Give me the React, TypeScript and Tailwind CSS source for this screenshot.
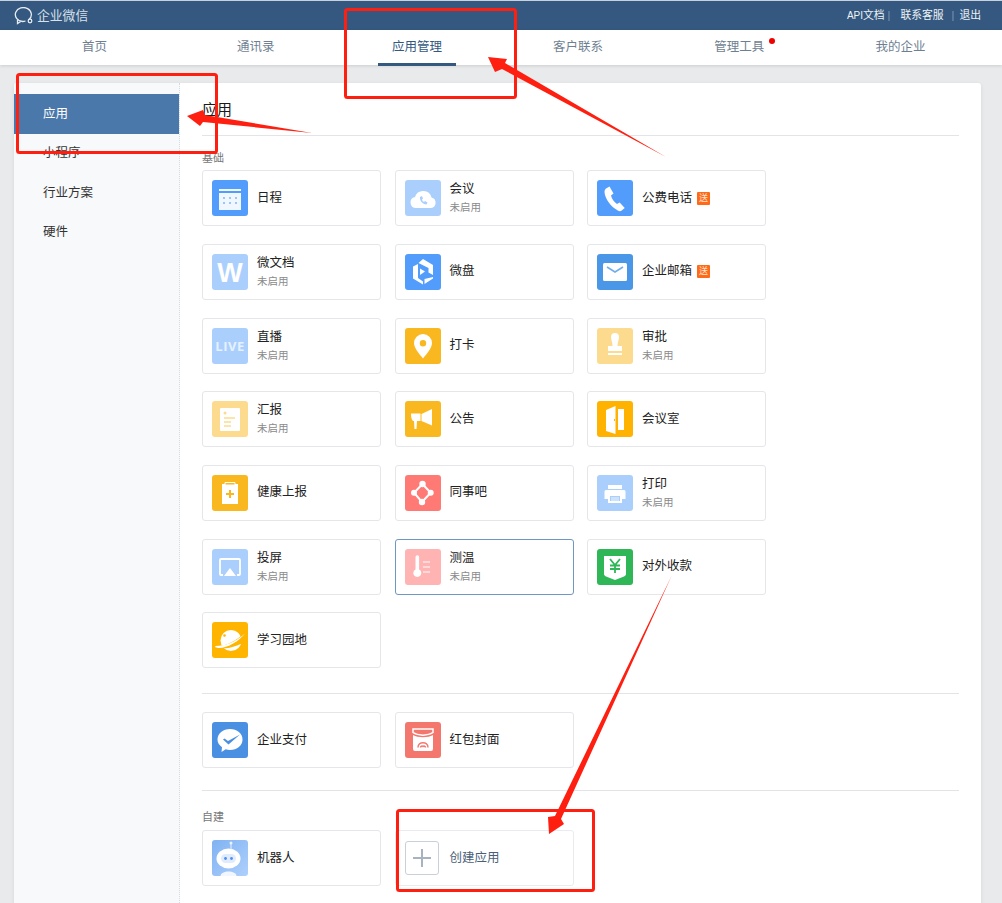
const navItems = ["首页", "通讯录", "应用管理", "客户联系", "管理工具", "我的企业"];
const sideItems = ["应用", "小程序", "行业方案", "硬件"];

type AppItem = { name: string; icon: string; off?: boolean; gift?: boolean; active?: boolean };

const baseApps: AppItem[] = [
  { name: "日程", icon: "calendar" },
  { name: "会议", icon: "cloud", off: true },
  { name: "公费电话", icon: "phone", gift: true },
  { name: "微文档", icon: "doc", off: true },
  { name: "微盘", icon: "disk" },
  { name: "企业邮箱", icon: "mail", gift: true },
  { name: "直播", icon: "live", off: true },
  { name: "打卡", icon: "pin" },
  { name: "审批", icon: "stamp", off: true },
  { name: "汇报", icon: "report", off: true },
  { name: "公告", icon: "horn" },
  { name: "会议室", icon: "door" },
  { name: "健康上报", icon: "health" },
  { name: "同事吧", icon: "share" },
  { name: "打印", icon: "print", off: true },
  { name: "投屏", icon: "cast", off: true },
  { name: "测温", icon: "thermo", off: true, active: true },
  { name: "对外收款", icon: "money" },
  { name: "学习园地", icon: "planet" },
];

const payApps: AppItem[] = [
  { name: "企业支付", icon: "pay" },
  { name: "红包封面", icon: "redbag" },
];

const AppIcon = ({ kind }: { kind: string }) => {
  const box = "block w-9 h-9 shrink-0";
  switch (kind) {
    case "calendar":
      return (
        <svg className={box} viewBox="0 0 36 36">
          <rect width="36" height="36" rx="3" fill="#529dfc" />
          <rect x="7" y="9" width="22" height="21" fill="#fff" opacity=".92" />
          <rect x="7" y="11" width="22" height="2" fill="#529dfc" />
          {[12, 18, 24].map((x) =>
            [18, 23].map((y) => <circle key={x + "-" + y} cx={x} cy={y} r="1" fill="#7db5fc" />)
          )}
        </svg>
      );
    case "cloud":
      return (
        <svg className={box} viewBox="0 0 36 36">
          <rect width="36" height="36" rx="3" fill="#abcffd" />
          <path d="M11 28a5.5 5.5 0 0 1-1-10.900a8.500 8.500 0 0 1 16.500 0.500a5.300 5.300 0 0 1-.5 10.400z" fill="#fff" />
          <path d="M15 17c-.5 4 2.500 7 6.500 7.500l1-2-2.500-1.500-1 1c-1-.5-1.800-1.500-2-2.500l1-1-1-2.500z" fill="#abcffd" />
        </svg>
      );
    case "phone":
      return (
        <svg className={box} viewBox="0 0 36 36">
          <rect width="36" height="36" rx="3" fill="#529dfc" />
          <path d="M9 8.500l3.500-2 4 7-2.500 2c.8 3.500 3 6.500 6 8.500l2.700-1.500 5 5.500-3 2.500c-1 .8-2.300.8-3.500.2C14 27 8 19 7.500 12c0-1.500.5-2.800 1.500-3.500z" fill="#fff" />
        </svg>
      );
    case "doc":
      return (
        <svg className={box} viewBox="0 0 36 36">
          <rect width="36" height="36" rx="3" fill="#abcffd" />
          <text x="18" y="28" textAnchor="middle" fontSize="27" fontWeight="700" fill="#fff" fontFamily="Liberation Sans">W</text>
        </svg>
      );
    case "disk":
      return (
        <svg className={box} viewBox="0 0 36 36">
          <rect width="36" height="36" rx="3" fill="#529dfc" />
          <path d="M18 5l10 6v10l-4.500-2.500V14L13.500 9z" fill="#fff" />
          <path d="M8 12.500l5-2.500v14l5 3.500v3L8 24.500z" fill="#fff" />
          <path d="M28 23v1.500L19.500 30v-5z" fill="#fff" />
          <path d="M15 14.500l5 3-5 3.500z" fill="#fff" />
        </svg>
      );
    case "mail":
      return (
        <svg className={box} viewBox="0 0 36 36">
          <rect width="36" height="36" rx="3" fill="#4a97e8" />
          <rect x="6" y="9" width="24" height="18" rx="1.500" fill="#fff" />
          <path d="M10 13l8 5 8-5" fill="none" stroke="#6fadee" strokeWidth="1.500" />
        </svg>
      );
    case "live":
      return (
        <svg className={box} viewBox="0 0 36 36">
          <rect width="36" height="36" rx="3" fill="#abcffd" />
          <text x="18" y="23" textAnchor="middle" fontSize="13" fontWeight="700" fill="#e6f1ff" fontFamily="Open Sans" letterSpacing=".5">LIVE</text>
        </svg>
      );
    case "pin":
      return (
        <svg className={box} viewBox="0 0 36 36">
          <rect width="36" height="36" rx="3" fill="#f9b81f" />
          <path fillRule="evenodd" d="M18 6a9 9 0 0 0-9 9c0 5 5 10.500 9 15.500 4-5 9-10.500 9-15.500a9 9 0 0 0-9-9zm0 6a3.200 3.200 0 1 1 0 6.400 3.200 3.200 0 0 1 0-6.400z" fill="#fff" />
        </svg>
      );
    case "stamp":
      return (
        <svg className={box} viewBox="0 0 36 36">
          <rect width="36" height="36" rx="3" fill="#fddb8e" />
          <path d="M14 9a4 4 0 0 1 8 0c0 3-1.500 5-1.500 9h4.500v5H11v-5h4.500c0-4-1.500-6-1.500-9z" fill="#fff" />
          <rect x="11" y="25" width="14" height="2" fill="#fff" />
        </svg>
      );
    case "report":
      return (
        <svg className={box} viewBox="0 0 36 36">
          <rect width="36" height="36" rx="3" fill="#fddb8e" />
          <rect x="8" y="7" width="20" height="23" rx="1" fill="#fff" />
          <circle cx="13" cy="12" r="1.500" fill="#fddb8e" />
          <path d="M12 17h11M12 21h7M12 25h7" stroke="#fddb8e" strokeWidth="1.500" />
        </svg>
      );
    case "horn":
      return (
        <svg className={box} viewBox="0 0 36 36">
          <rect width="36" height="36" rx="3" fill="#f9b81f" />
          <path d="M6 12.500h9.500V20h-3.500l-.5 8h-2l-.5-8H8c-1.500-1.500-2-4-2-7.500z" fill="#fff" />
          <path d="M16.500 13L27 8v16.500L16.500 20z" fill="#fff" />
        </svg>
      );
    case "door":
      return (
        <svg className={box} viewBox="0 0 36 36">
          <rect width="36" height="36" rx="3" fill="#ffb200" />
          <path d="M9 9L18.500 5v28L9 30z" fill="#fff" />
          <rect x="21" y="8" width="6" height="21" fill="#fff" />
          <rect x="17" y="18" width="1" height="2" fill="#ffb200" />
        </svg>
      );
    case "health":
      return (
        <svg className={box} viewBox="0 0 36 36">
          <rect width="36" height="36" rx="3" fill="#f9b81f" />
          <path d="M10 9h16v20H10z" fill="#fff" />
          <path d="M13 7.500h10v2.500H13z" fill="#f9b81f" stroke="#fff" strokeWidth="1" />
          <path d="M18 15v8M14 19h8" stroke="#f9b81f" strokeWidth="2" />
        </svg>
      );
    case "share":
      return (
        <svg className={box} viewBox="0 0 36 36">
          <rect width="36" height="36" rx="3" fill="#ff7a75" />
          <path d="M17.500 9L25.700 17.700 17 27 9 17.700z" fill="none" stroke="#fff" strokeWidth="2" />
          <circle cx="17.500" cy="9" r="3.200" fill="#fff" />
          <circle cx="9" cy="17.700" r="3" fill="#fff" />
          <circle cx="25.700" cy="17.700" r="3" fill="#fff" />
          <circle cx="17" cy="27" r="3.200" fill="#fff" />
        </svg>
      );
    case "print":
      return (
        <svg className={box} viewBox="0 0 36 36">
          <rect width="36" height="36" rx="3" fill="#abcffd" />
          <path d="M11 10h14v4H11z" fill="#fff" />
          <path d="M9 15h18a1.500 1.500 0 0 1 1.500 1.500V24H25v4H11v-4H7.500v-7.500A1.500 1.500 0 0 1 9 15z" fill="#fff" />
          <path d="M13 21h10v5H13z" fill="#abcffd" />
          <path d="M14 23h8M14 25h8" stroke="#fff" strokeWidth=".8" />
        </svg>
      );
    case "cast":
      return (
        <svg className={box} viewBox="0 0 36 36">
          <rect width="36" height="36" rx="3" fill="#abcffd" />
          <path d="M11 26H9a1 1 0 0 1-1-1V11a1 1 0 0 1 1-1h18a1 1 0 0 1 1 1v14a1 1 0 0 1-1 1h-2" fill="none" stroke="#fff" strokeWidth="1.800" />
          <path d="M18 19l6 8H12z" fill="#fff" />
        </svg>
      );
    case "thermo":
      return (
        <svg className={box} viewBox="0 0 36 36">
          <rect width="36" height="36" rx="3" fill="#ffb3b3" />
          <path d="M10.500 8a1.800 1.800 0 0 1 3.600 0v12.500a4 4 0 1 1-3.600 0z" fill="#fff" />
          <path d="M18 13h7M18 18h7M18 23h7" stroke="#fff" strokeWidth="1" />
        </svg>
      );
    case "money":
      return (
        <svg className={box} viewBox="0 0 36 36">
          <rect width="36" height="36" rx="3" fill="#2fb757" />
          <path d="M7 7h22v18c0 1-1 2-2 2.500L18 31l-9-3.500c-1-.5-2-1.500-2-2.500z" fill="#fff" />
          <path d="M13 10l5 6 5-6M18 16v8M13 16.500h10M13 20h10" fill="none" stroke="#2fb757" strokeWidth="1.800" />
        </svg>
      );
    case "planet":
      return (
        <svg className={box} viewBox="0 0 36 36">
          <rect width="36" height="36" rx="3" fill="#ffb400" />
          <circle cx="19" cy="18.500" r="10.500" fill="#fff" />
          <path d="M3 24c9 1 20-4 31-14v9c-8 5-19 9-31 7z" fill="#ffb400" />
          <path d="M3.500 24c10 0 20-4 29.500-12.500C27 19 16 26 7 26c-2.500 0-4.500-.8-3.500-2z" fill="#fff" />
          <circle cx="12.500" cy="13.500" r="1.300" fill="#ffb400" />
        </svg>
      );
    case "pay":
      return (
        <svg className={box} viewBox="0 0 36 36">
          <rect width="36" height="36" rx="3" fill="#4a90e2" />
          <path d="M18 7c7 0 12.500 4.500 12.500 10.500S25 28 18 28c-1.500 0-3-.2-4.300-.7L9.500 30l.5-4.800C7 23 5.500 20.500 5.500 17.500 5.500 11.500 11 7 18 7z" fill="#fff" />
          <path d="M11 17.500l1.500-1 3.500 2.500L28 12.500l-11.500 10z" fill="#4a90e2" />
        </svg>
      );
    case "redbag":
      return (
        <svg className={box} viewBox="0 0 36 36">
          <rect width="36" height="36" rx="3" fill="#f4776d" />
          <path d="M8 7h20v3.500c-5 3.500-15 3.500-20 0z" fill="none" stroke="#fff" strokeWidth="1.500" />
          <path d="M8 13c5 3 15 3 20 0v14a2 2 0 0 1-2 2H10a2 2 0 0 1-2-2z" fill="#fff" />
          <path d="M13 25.500c0-6.500 10-6.500 10 0M15.500 25.500a1.500 1.500 0 0 1 2.500-1 1.500 1.500 0 0 1 2.500 1" fill="none" stroke="#f4776d" strokeWidth="1.500" />
        </svg>
      );
    case "robot":
      return (
        <svg className={box} viewBox="0 0 36 36">
          <defs>
            <linearGradient id="robotBg" x1="0" y1="0" x2="1" y2="1">
              <stop offset="0" stopColor="#7fb2f2" />
              <stop offset="1" stopColor="#aed0fc" />
            </linearGradient>
          </defs>
          <rect width="36" height="36" rx="3" fill="url(#robotBg)" />
          <circle cx="19" cy="3" r="1.500" fill="#e8f1ff" />
          <path d="M19 4v5" stroke="#e8f1ff" strokeWidth="1" />
          <ellipse cx="16.500" cy="18.500" rx="12" ry="10" fill="#fff" />
          <rect x="9" y="14" width="15" height="9" rx="4.500" fill="#e0ecfe" />
          <circle cx="13.500" cy="18.500" r="1.400" fill="#4a90f2" />
          <circle cx="19.500" cy="18.500" r="1.400" fill="#4a90f2" />
          <path d="M8.500 36c0-6 16-6 16 0z" fill="#f1f6ff" />
        </svg>
      );
    default:
      return null;
  }
};

const AppCard = ({ item }: { item: AppItem }) => (
  <div
    className={`h-[56px] flex items-center pl-[9px] gap-[9px] bg-white border rounded-[3px] ${
      item.active ? "border-[#6f97c4]" : "border-[#e4e6e9]"
    }`}
  >
    <AppIcon kind={item.icon} />
    <div className="flex flex-col">
      <div className="flex items-center gap-[5px] text-[12.500px] leading-[17px] text-[#222]">
        {item.name}
        {item.gift && (
          <span className="w-[13px] h-[13px] flex items-center justify-center rounded-[1px] bg-[#ff6a1a] text-[9px] leading-none text-[#ffe3d1]">
            送
          </span>
        )}
      </div>
      {item.off && <div className="text-[10.500px] leading-[15px] mt-[2px] text-[#8a8a8a]">未启用</div>}
    </div>
  </div>
);

const CardGrid = ({ children }: { children: React.ReactNode }) => (
  <div className="grid grid-cols-[179px_179px_179px] gap-x-[13.500px] gap-y-[17.680px]">{children}</div>
);

// the red marks drawn on top of the screenshot
const Annotations = () => (
  <svg className="absolute left-0 top-0 w-[1002px] h-[903px] pointer-events-none" viewBox="0 0 1002 903">
    <g fill="none" stroke="#ff1f10" strokeWidth="3">
      <rect x="345.500" y="9.500" width="170" height="88" rx="2" />
      <rect x="17.500" y="74.500" width="199" height="78" rx="2" />
      <rect x="397.500" y="810.500" width="196" height="80" rx="2" />
    </g>
    <g fill="#ff1f10">
      <polygon points="312,133 203,122 200,126 187,116 203,110 205,115" />
      <polygon points="666,157 502,69 495,72 488,57 507,59 505,63" />
      <polygon points="672,575 555,816 548,817 549,834 564,824 561,819" />
    </g>
  </svg>
);

export default function App() {
  return (
    <div className="relative w-[1002px] h-[903px] overflow-hidden bg-[#e8eaec] font-['Liberation_Sans','Noto_Sans_CJK_SC',sans-serif]">
      <header className="h-[30px] border-t border-[#c9d2dc] bg-[#34587f] flex items-center justify-between pl-[14px] pr-[21px]">
        <div className="flex items-center gap-[3px] text-[12.800px] text-[#d9e1ea]">
          <svg className="w-5 h-[18px]" viewBox="0 0 20 18" fill="none" stroke="#e6ecf2" strokeWidth="1.300">
            <path d="M15 12.500A8 7 0 1 0 8.500 14.500c1 0 2-.1 3-.5" />
            <path d="M3.500 12.500v4l3.200-2" />
            <circle cx="16" cy="14" r="1.800" />
          </svg>
          企业微信
        </div>
        <div className="flex items-center text-[10.800px] text-[#eef2f6]">
          <span>
            <span className="text-[10px]">API</span>文档
          </span>
          <span className="ml-[3px] mr-[10px] text-[#7f9ab8]">|</span>
          <span>联系客服</span>
          <span className="ml-[8px] mr-[5px] text-[#7f9ab8]">|</span>
          <span>退出</span>
        </div>
      </header>

      <nav className="h-[35px] bg-white shadow-[0_1px_3px_rgba(0,0,0,0.12)] pl-[14px] pr-[21px] grid grid-cols-6">
        {navItems.map((label, i) => (
          <div
            key={label}
            className={`relative flex items-center justify-center text-[12.500px] ${
              i === 2 ? "text-[#34587f]" : "text-[#6f7f92]"
            }`}
          >
            {label}
            {i === 2 && <span className="absolute bottom-[-1px] left-[41.500px] w-[78px] h-[3px] bg-[#34587f]" />}
            {label === "管理工具" && <span className="absolute top-[8px] left-[110px] w-[6px] h-[6px] rounded-full bg-[#f00000]" />}
          </div>
        ))}
      </nav>

      <div className="mt-[18px] mx-[14px] h-[900px] w-[967px] flex bg-white rounded-t-[3px] shadow-[0_1px_4px_rgba(0,0,0,0.08)]">
        <aside className="w-[166px] shrink-0 pt-[11px] bg-[#f8f9fb] border-r border-dotted border-[#d5dbe3] rounded-tl-[3px]">
          {sideItems.map((label, i) => (
            <div
              key={label}
              className={`h-[39.300px] flex items-center pl-[29px] text-[12.500px] ${
                i === 0 ? "h-[40px] bg-[#4a78ab] text-white" : "text-[#333]"
              }`}
            >
              {label}
            </div>
          ))}
        </aside>

        <main className="flex-1 px-[22px]">
          <div className="h-[53px] pt-[16px] border-b border-[#e2e4e7] text-[15px] leading-[22px] text-[#1a1a1a]">应用</div>
          <div className="h-[34.200px] pt-[15px] text-[11px] leading-[14px] text-[#777]">基础</div>
          <CardGrid>
            {baseApps.map((a) => (
              <AppCard key={a.name} item={a} />
            ))}
          </CardGrid>
          <div className="mt-[25px] mb-[18px] border-t border-[#e2e4e7]" />
          <CardGrid>
            {payApps.map((a) => (
              <AppCard key={a.name} item={a} />
            ))}
          </CardGrid>
          <div className="mt-[22px] border-t border-[#e2e4e7]" />
          <div className="h-[39px] pt-[19px] text-[11px] leading-[14px] text-[#777]">自建</div>
          <CardGrid>
            <AppCard item={{ name: "机器人", icon: "robot" }} />
            <div className="h-[56px] flex items-center pl-[9px] gap-[11px] bg-white border border-[#e9ebee] rounded-[3px]">
              <div className="w-[34px] h-[34px] rounded-[3px] border border-[#c8d0da] flex items-center justify-center">
                <svg className="w-5 h-5" viewBox="0 0 20 20" stroke="#a8b3c0" strokeWidth="2">
                  <path d="M10 1v18M1 10h18" />
                </svg>
              </div>
              <span className="text-[12.500px] text-[#4b5f78]">创建应用</span>
            </div>
          </CardGrid>
        </main>
      </div>

      <Annotations />
    </div>
  );
}
